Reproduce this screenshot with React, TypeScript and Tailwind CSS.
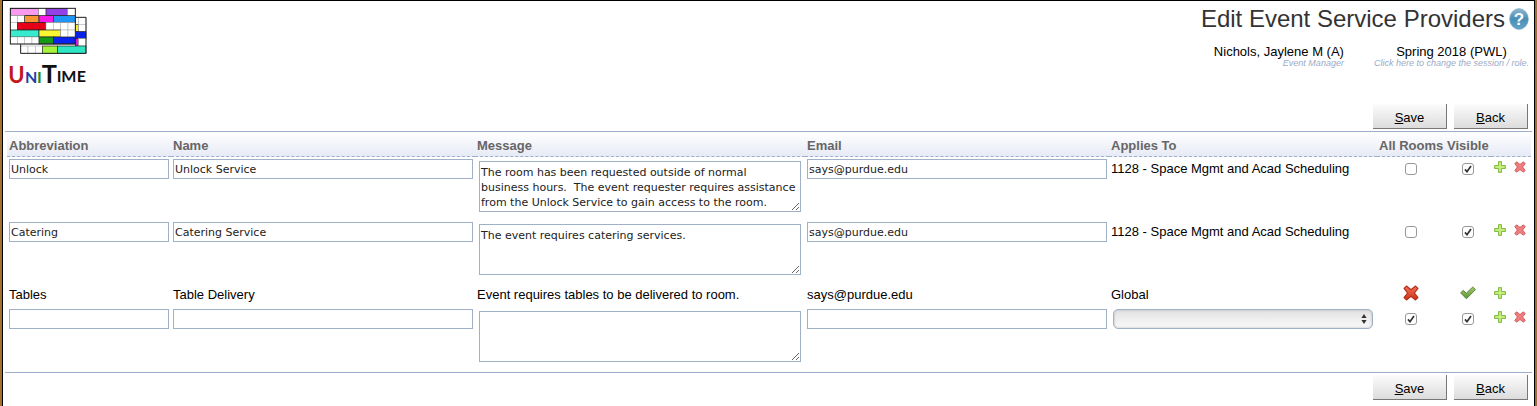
import React from "react";

const fieldClass =
  "block h-5 w-full rounded-none border border-[#9fb1c6] bg-white px-px pt-[2px] font-['DejaVu_Sans',sans-serif] text-[11px] text-[#222] outline-none";

type Block = [number, number, number, number, string];

const backBlocks: Block[] = [
  [226, 52, 10, 21, "#fff"],
  [236, 52, 22, 21, "#fff"],
  [226, 73, 10, 22, "#f6ee2e"],
  [236, 73, 22, 22, "#fff"],
  [226, 95, 32, 21, "#0a22e8"],
  [226, 116, 10, 22, "#e818d8"],
  [236, 116, 22, 22, "#fff"],
  [62, 138, 22, 22, "#fff"],
  [84, 138, 22, 22, "#fff"],
  [106, 138, 21, 22, "#fff"],
  [127, 138, 45, 22, "#a4f43c"],
  [172, 138, 86, 22, "#2fe6c4"],
];

const frontBlocks: Block[] = [
  [31, 25, 85, 22, "#f79af0"],
  [116, 25, 22, 22, "#fff"],
  [138, 25, 65, 22, "#9440e8"],
  [203, 25, 23, 22, "#fff"],
  [31, 47, 22, 21, "#fff"],
  [53, 47, 21, 21, "#fff"],
  [74, 47, 43, 21, "#f79434"],
  [117, 47, 43, 21, "#f51ae6"],
  [160, 47, 66, 21, "#1e96f5"],
  [31, 68, 21, 22, "#fff"],
  [52, 68, 86, 22, "#e60018"],
  [138, 68, 22, 22, "#fff"],
  [160, 68, 22, 22, "#fff"],
  [182, 68, 22, 22, "#fff"],
  [204, 68, 22, 22, "#fff"],
  [31, 90, 86, 21, "#37eccd"],
  [117, 90, 65, 21, "#fbf433"],
  [182, 90, 22, 21, "#fff"],
  [204, 90, 22, 21, "#fff"],
  [31, 111, 22, 21, "#fff"],
  [53, 111, 21, 21, "#fff"],
  [74, 111, 22, 21, "#fff"],
  [96, 111, 21, 21, "#fff"],
  [117, 111, 43, 21, "#159a16"],
  [160, 111, 66, 21, "#0a22f0"],
];

function Grid({ blocks }: { blocks: Block[] }) {
  return (
    <>
      {blocks.map(([x, y, w, h, fill]) => (
        <rect
          key={`${x}-${y}`}
          x={x}
          y={y}
          width={w}
          height={h}
          fill={fill}
          stroke={fill === "#fff" ? "#aaa" : "#222"}
          strokeWidth={fill === "#fff" ? 1.5 : 2}
        />
      ))}
    </>
  );
}

function Logo() {
  return (
    <svg width="80" height="90" viewBox="24 21 240 270" role="img" aria-label="UniTime">
      <Grid blocks={backBlocks} />
      <path d="M226 52H258V160H62V132" fill="none" stroke="#222" strokeWidth="3" />
      <Grid blocks={frontBlocks} />
      <rect x="31" y="25" width="195" height="107" fill="none" stroke="#222" strokeWidth="3" />
      <g fontFamily="Lato, sans-serif" fontWeight="700">
        <text x="25" y="249" fontSize="66" fill="#c4161c">U</text>
        <text x="75" y="249" fontSize="48" fill="#1c3fa8">N</text>
        <text x="111" y="249" fontSize="48" fill="#1d8a2c">I</text>
        <text x="125" y="249" fontSize="76" fill="#111">T</text>
        <text x="170" y="247" fontSize="48" fill="#111">I</text>
        <text x="184" y="247" fontSize="48" fill="#111">M</text>
        <text x="230" y="247" fontSize="48" fill="#111">E</text>
      </g>
    </svg>
  );
}

function HelpIcon() {
  return (
    <svg width="20" height="22" viewBox="0 0 20 22" className="block">
      <defs>
        <linearGradient id="help" x1="0" y1="0" x2="0" y2="1">
          <stop offset="0" stopColor="#8fb8cf" />
          <stop offset="0.5" stopColor="#4a8db5" />
          <stop offset="1" stopColor="#5ea6cc" />
        </linearGradient>
      </defs>
      <ellipse cx="10" cy="11" rx="9.4" ry="10.4" fill="url(#help)" stroke="#7ea9bf" strokeWidth="0.6" />
      <text x="10" y="16.5" textAnchor="middle" fontSize="17" fontWeight="700" fill="#fff" fontFamily="Liberation Sans, sans-serif">?</text>
    </svg>
  );
}

function PlusIcon() {
  return (
    <svg width="12" height="12" viewBox="0 0 12 12" className="block">
      <path d="M4.5 0.6H7.5V4.5H11.4V7.5H7.5V11.4H4.5V7.5H0.6V4.5H4.5Z" fill="#b4e66a" stroke="#86bb45" strokeLinejoin="round" />
      <path d="M6 1.8V10.2M1.8 6H10.2" stroke="#cdf48e" />
    </svg>
  );
}

const crossPath =
  "M2.6 0.8L6 3.5L9.4 0.8L11.2 2.6L8.6 6L11.2 9.4L9.4 11.2L6 8.5L2.6 11.2L0.8 9.4L3.4 6L0.8 2.6Z";

function DeleteIcon() {
  return (
    <svg width="12" height="12" viewBox="0 0 12 12" className="block">
      <path d={crossPath} fill="#ee7d7d" stroke="#cf5257" strokeWidth="0.9" strokeLinejoin="round" />
    </svg>
  );
}

function NoIcon() {
  return (
    <svg width="16" height="16" viewBox="0 0 12 12" className="mx-auto block" role="img" aria-label="No">
      <defs>
        <linearGradient id="no" x1="0" y1="0" x2="0" y2="1">
          <stop offset="0" stopColor="#f0745a" />
          <stop offset="1" stopColor="#cf3018" />
        </linearGradient>
      </defs>
      <path d={crossPath} fill="url(#no)" stroke="#b5301c" strokeWidth="0.9" strokeLinejoin="round" />
    </svg>
  );
}

function YesIcon() {
  return (
    <svg width="16" height="16" viewBox="0 0 16 16" className="mx-auto block" role="img" aria-label="Yes">
      <defs>
        <linearGradient id="yes" x1="0" y1="0" x2="0" y2="1">
          <stop offset="0" stopColor="#a5c970" />
          <stop offset="1" stopColor="#5b9332" />
        </linearGradient>
      </defs>
      <path d="M0.6 7.8L3.2 5.4L6.3 8.2L12.8 2L15.5 4.6L6.4 13.8Z" fill="url(#yes)" stroke="#527d30" strokeWidth="0.9" strokeLinejoin="round" />
    </svg>
  );
}

function CheckBox({ label, checked }: { label: string; checked: boolean }) {
  return (
    <span className="mx-auto mt-1 grid size-3 place-items-center">
      <input
        type="checkbox"
        aria-label={label}
        defaultChecked={checked}
        className="peer col-start-1 row-start-1 block size-3 appearance-none rounded-[3px] border border-[#999] bg-white"
      />
      <svg
        width="8"
        height="8"
        viewBox="0 0 8 8"
        className="pointer-events-none invisible col-start-1 row-start-1 peer-checked:visible"
      >
        <path d="M1 4.4L3 6.7L7 0.9" fill="none" stroke="#333" strokeWidth="1.7" />
      </svg>
    </span>
  );
}

function Actions() {
  return (
    <div className="flex justify-end gap-[7px]">
      {["Save", "Back"].map((name) => (
        <button
          key={name}
          type="button"
          className="h-[25px] w-[74px] border-r border-b border-[#777] bg-linear-to-b from-[#fcfcfc] to-[#dcdcdc] pt-1 text-[13px] leading-5 text-black"
        >
          <span className="underline">{name[0]}</span>
          {name.slice(1)}
        </button>
      ))}
    </div>
  );
}

type Provider = {
  abbreviation: string;
  name: string;
  message: string;
  email: string;
  appliesTo?: string;
  allRooms: boolean;
};

function EditRow({ provider, id }: { provider: Provider; id: string }) {
  return (
    <tr className="h-[63px] align-top">
      <td className="p-[2px]">
        <input aria-label={`Abbreviation ${id}`} className={fieldClass} defaultValue={provider.abbreviation} />
      </td>
      <td className="p-[2px]">
        <input aria-label={`Name ${id}`} className={fieldClass} defaultValue={provider.name} />
      </td>
      <td className="p-1">
        <textarea
          aria-label={`Message ${id}`}
          className="block h-[51px] w-full resize overflow-hidden rounded-none border border-[#9fb1c6] bg-white pt-[3px] pr-[3px] pl-px font-['DejaVu_Sans',sans-serif] text-[11px] leading-[15px] text-[#222] outline-none"
          defaultValue={provider.message}
        />
      </td>
      <td className="p-[2px]">
        <input type="email" aria-label={`Email ${id}`} className={fieldClass} defaultValue={provider.email} />
      </td>
      <td className="p-[2px]">
        {provider.appliesTo ?? (
          <div className="grid px-[2px]">
            <select
              aria-label={`Applies To ${id}`}
              className="col-start-1 row-start-1 h-5 w-full appearance-none rounded-[5px] border border-[#9fb1c6] bg-linear-to-b from-[#e2e2e2] to-[#fafafa] shadow-[inset_0_0_3px_#bbb]"
            >
              <option value=""></option>
              <option>Global</option>
            </select>
            <svg
              width="6"
              height="10"
              viewBox="0 0 6 10"
              className="pointer-events-none col-start-1 row-start-1 mr-1.5 self-center justify-self-end"
            >
              <path d="M3 0L5.6 4H0.4ZM3 10L5.6 6H0.4Z" fill="#333" />
            </svg>
          </div>
        )}
      </td>
      <td className="p-[2px]">
        <CheckBox label={`All Rooms ${id}`} checked={provider.allRooms} />
      </td>
      <td className="p-[2px]">
        <CheckBox label={`Visible ${id}`} checked />
      </td>
      <td className="px-[3px] py-1">
        <button type="button" aria-label={`Add after ${id}`} className="block">
          <PlusIcon />
        </button>
      </td>
      <td className="px-[3px] py-1">
        <button type="button" aria-label={`Delete ${id}`} className="block">
          <DeleteIcon />
        </button>
      </td>
    </tr>
  );
}

const providers: Provider[] = [
  {
    abbreviation: "Unlock",
    name: "Unlock Service",
    message:
      "The room has been requested outside of normal business hours.  The event requester requires assistance from the Unlock Service to gain access to the room.",
    email: "says@purdue.edu",
    appliesTo: "1128 - Space Mgmt and Acad Scheduling",
    allRooms: false,
  },
  {
    abbreviation: "Catering",
    name: "Catering Service",
    message: "The event requires catering services.",
    email: "says@purdue.edu",
    appliesTo: "1128 - Space Mgmt and Acad Scheduling",
    allRooms: false,
  },
];

const emptyProvider: Provider = { abbreviation: "", name: "", message: "", email: "", allRooms: true };

const headings = ["Abbreviation", "Name", "Message", "Email", "Applies To", "All Rooms", "Visible"];

export default function App() {
  return (
    <div className="min-h-screen bg-[#a1722f] px-[2px] font-['Liberation_Sans',Arial,sans-serif] text-[13px] leading-5 text-black">
      <div className="min-h-screen border-x border-t border-black bg-white px-[2px]">
        <header className="flex h-[103px] items-start justify-between pt-1.5 pl-[3px]">
          <Logo />
          <div className="pr-[3px]">
            <div className="flex items-center justify-end gap-1">
              <h1 className="text-[24px] leading-6 text-[#333]">Edit Event Service Providers</h1>
              <button type="button" aria-label="Help">
                <HelpIcon />
              </button>
            </div>
            <div className="mt-3.5 flex justify-end gap-[30px]">
              <div className="text-right">
                <div className="leading-[14px]">Nichols, Jaylene M (A)</div>
                <div className="text-[9px] leading-2 text-[#9aabc8] italic">Event Manager</div>
              </div>
              <div className="text-center">
                <div className="leading-[14px]">Spring 2018 (PWL)</div>
                <a href="#session" className="block text-[9px] leading-2 text-[#9aabc8] italic">
                  Click here to change the session / role.
                </a>
              </div>
            </div>
          </div>
        </header>

        <main>
          <div className="border-b border-[#9cb0ce] pr-1 pb-[2px]">
            <Actions />
          </div>
          <div className="border-b border-[#9cb0ce] pr-px pb-[2px] pl-[2px]">
            <table className="w-full table-fixed border-separate border-spacing-0">
              <colgroup>
                <col className="w-[164px]" />
                <col className="w-[304px]" />
                <col className="w-[330px]" />
                <col className="w-[304px]" />
                <col />
                <col className="w-[68px]" />
                <col className="w-[46px]" />
                <col className="w-5" />
                <col className="w-5" />
              </colgroup>
              <thead>
                <tr className="h-[25px] bg-linear-to-b from-white to-[#e6eaf5] text-left text-[#666]">
                  {headings.map((heading) => (
                    <th
                      key={heading}
                      scope="col"
                      className="border-b border-dashed border-[#9cb0ce] px-[2px] pt-1 font-bold whitespace-nowrap"
                    >
                      {heading}
                    </th>
                  ))}
                  <td colSpan={2} className="border-b border-dashed border-[#9cb0ce]"></td>
                </tr>
              </thead>
              <tbody>
                {providers.map((provider) => (
                  <EditRow key={provider.name} provider={provider} id={provider.name} />
                ))}
                <tr className="h-6 align-top">
                  <td className="p-[2px]">Tables</td>
                  <td className="p-[2px]">Table Delivery</td>
                  <td className="p-[2px]">Event requires tables to be delivered to room.</td>
                  <td className="p-[2px]">says@purdue.edu</td>
                  <td className="p-[2px]">Global</td>
                  <td className="p-[2px]">
                    <NoIcon />
                  </td>
                  <td className="p-[2px]">
                    <YesIcon />
                  </td>
                  <td className="px-[3px] py-1">
                    <button type="button" aria-label="Add after Table Delivery" className="block">
                      <PlusIcon />
                    </button>
                  </td>
                  <td></td>
                </tr>
                <EditRow provider={emptyProvider} id="New provider" />
              </tbody>
            </table>
          </div>
          <div className="pt-[2px] pr-1">
            <Actions />
          </div>
        </main>
      </div>
    </div>
  );
}
